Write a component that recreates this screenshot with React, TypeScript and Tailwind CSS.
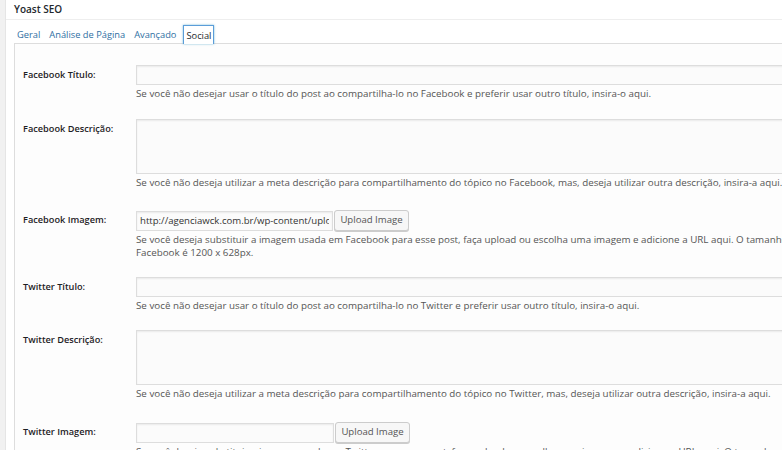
import React from 'react';

const font = { fontFamily: '"Open Sans", "Liberation Sans", sans-serif' };

const TextInput: React.FC<{ value?: string; className?: string }> = ({ value = '', className = '' }) => (
  <input
    type="text"
    readOnly
    value={value}
    className={`block h-[20px] border border-[#ddd] bg-[#fbfbfb] px-[3px] text-[9.6px] text-[#333] shadow-[inset_0_1px_2px_rgba(0,0,0,0.07)] outline-none ${className}`}
  />
);

const UploadButton: React.FC = () => (
  <button className="ml-[1px] h-[21px] w-[75px] rounded-[3px] border border-[#ccc] bg-[#f7f7f7] text-[9.6px] text-[#555] shadow-[0_1px_0_#ccc]">
    Upload Image
  </button>
);

const Help: React.FC<{ children: React.ReactNode }> = ({ children }) => (
  <p className="mt-[2px] whitespace-nowrap text-[9.8px] leading-[13px] text-[#555]">{children}</p>
);

const Row: React.FC<{ label: string; top: string; children: React.ReactNode }> = ({ label, top, children }) => (
  <div className={`flex ${top}`}>
    <div className="w-[121px] shrink-0 pl-[8px] pt-[3px] text-[9.2px] font-semibold leading-[14px] text-[#1d2125]">
      {label}
    </div>
    <div className="min-w-0 flex-1">{children}</div>
  </div>
);

const Textarea: React.FC = () => (
  <div className="h-[55px] w-[700px] border border-[#ddd] bg-[#fbfbfb] shadow-[inset_0_1px_2px_rgba(0,0,0,0.07)]" />
);

export default function App() {
  return (
    <div style={font} className="flex h-[450px] w-[782px] overflow-hidden bg-[#f1f1f1]">
      <div className="ml-[5px] flex-1 border-l border-[#e5e5e5] bg-white">
        {/* header */}
        <div className="h-[20px] border-b border-[#eee] pl-[8px] text-[10px] font-semibold leading-[18px] text-[#23282d]">
          Yoast SEO
        </div>

        {/* tabs */}
        <div className="flex h-[23px] items-end pl-[11px] text-[9.3px] text-[#2f6fa3]">
          <span className="pb-[1px]">Geral</span>
          <span className="ml-[9px] pb-[1px]">Análise de Página</span>
          <span className="ml-[9px] pb-[1px]">Avançado</span>
          <span className="relative -mb-px ml-[7px] flex h-[19px] w-[31px] items-center justify-center border border-b-0 border-[#5b9dd9] bg-white pt-[1px] text-[#23282d] shadow-[0_0_2px_rgba(30,140,190,0.6)]">
            Social
          </span>
        </div>

        {/* panel */}
        <div className="ml-[8px] h-full border-l border-t border-[#ddd] bg-[#fdfdfd]">
          <Row label="Facebook Título:" top="mt-[21px]">
            <TextInput className="w-[700px]" />
            <Help>Se você não desejar usar o título do post ao compartilha-lo no Facebook e preferir usar outro título, insira-o aqui.</Help>
          </Row>

          <Row label="Facebook Descrição:" top="mt-[19px]">
            <Textarea />
            <Help>Se você não deseja utilizar a meta descrição para compartilhamento do tópico no Facebook, mas, deseja utilizar outra descrição, insira-a aqui.</Help>
          </Row>

          <Row label="Facebook Imagem:" top="mt-[21px]">
            <div className="flex items-center">
              <TextInput className="w-[197px]" value="http://agenciawck.com.br/wp-content/uploads/2015/06/imagem-facebook.jpg" />
              <UploadButton />
            </div>
            <Help>
              Se você deseja substituir a imagem usada em Facebook para esse post, faça upload ou escolha uma imagem e adicione a URL aqui. O tamanho recomendado de imagem para
              <br />
              Facebook é 1200 x 628px.
            </Help>
          </Row>

          <Row label="Twitter Título:" top="mt-[18px]">
            <TextInput className="w-[700px]" />
            <Help>Se você não desejar usar o título do post ao compartilha-lo no Twitter e preferir usar outro título, insira-o aqui.</Help>
          </Row>

          <Row label="Twitter Descrição:" top="mt-[18px]">
            <Textarea />
            <Help>Se você não deseja utilizar a meta descrição para compartilhamento do tópico no Twitter, mas, deseja utilizar outra descrição, insira-a aqui.</Help>
          </Row>

          <Row label="Twitter Imagem:" top="mt-[22px]">
            <div className="flex items-center">
              <TextInput className="w-[198px]" />
              <UploadButton />
            </div>
            <Help>Se você deseja substituir a imagem usada em Twitter para esse post, faça upload ou escolha uma imagem e adicione a URL aqui. O tamanho de imagem recomendado para Twitter é 1024 x 512px.</Help>
          </Row>
        </div>
      </div>
    </div>
  );
}
